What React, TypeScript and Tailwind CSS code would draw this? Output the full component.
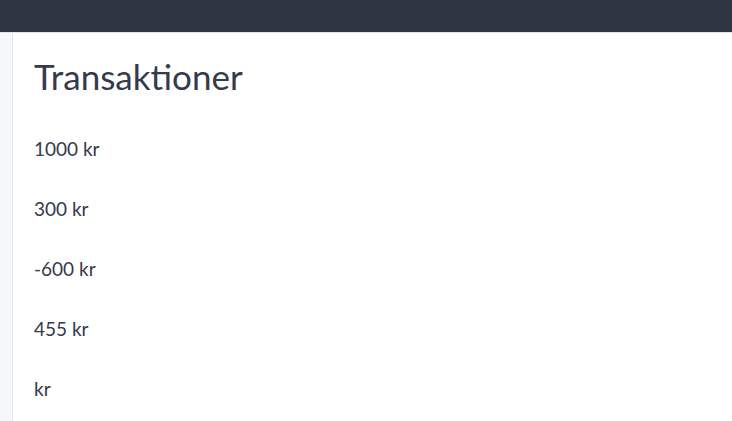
export default function App() {
  const items = ["1000 kr", "300 kr", "-600 kr", "455 kr", " kr"];
  return (
    <div className="h-[421px] w-[732px] overflow-hidden bg-white text-[#353a4c]" style={{ fontFamily: 'Lato, "Open Sans", sans-serif' }}>
      <div className="h-8 bg-[#2f3542]" />
      <div className="flex h-full border-t border-[#dfe3ea]">
        <div className="w-[13px] shrink-0 border-r border-[#e3e6eb] bg-[#f6f7f9]" />
        <main className="flex-1 pl-[21px] pr-5 pt-[22px]">
          <h1 className="text-[35px] leading-[42px] font-normal">Transaktioner</h1>
          <div className="mt-[22px]">
            {items.map((t, i) => (
              <div key={i} className="h-[60px] flex items-center text-[19px]">{t}</div>
            ))}
          </div>
        </main>
      </div>
    </div>
  );
}
